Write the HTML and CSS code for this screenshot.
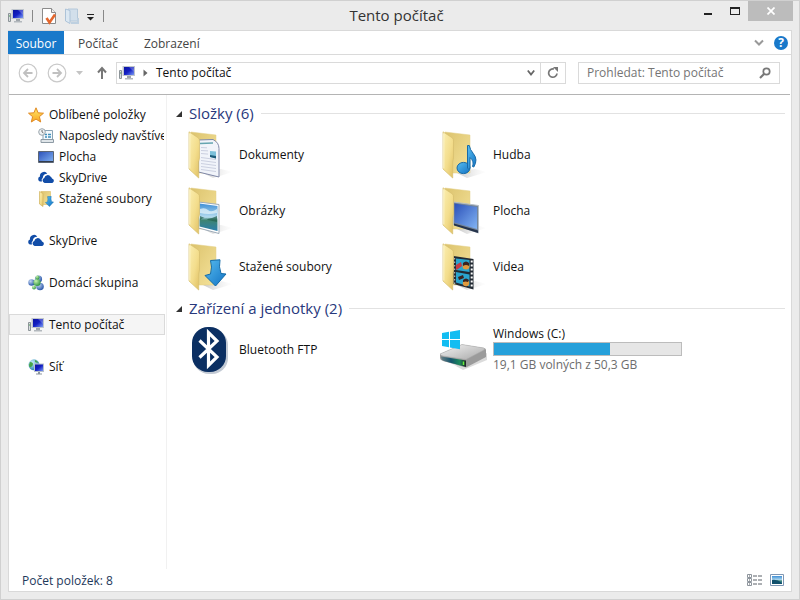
FILE: index.html
```html
<!DOCTYPE html>
<html lang="cs">
<head>
<meta charset="utf-8">
<meta name="viewport" content="width=device-width, initial-scale=1">
<title>Tento počítač</title>
<link rel="stylesheet" href="styles.css">
</head>
<body>
<svg class="defs" aria-hidden="true">
  <defs>
    <linearGradient id="flap" x1="0" y1="0" x2="1" y2="1"><stop offset="0" stop-color="#fbeeb0"/><stop offset=".55" stop-color="#f3dd8c"/><stop offset="1" stop-color="#dfbf62"/></linearGradient>
    <linearGradient id="back" x1="0" y1="0" x2="1" y2="1"><stop offset="0" stop-color="#dcc36d"/><stop offset="1" stop-color="#f5e39b"/></linearGradient>
    <linearGradient id="blue" x1="0" y1="0" x2="1" y2="1"><stop offset="0" stop-color="#57bdf0"/><stop offset="1" stop-color="#1272c4"/></linearGradient>
    <linearGradient id="screen" x1="0" y1="0" x2="1" y2="1"><stop offset="0" stop-color="#2b50b8"/><stop offset="1" stop-color="#82b4f4"/></linearGradient>
    <linearGradient id="pcscreen" x1="0" y1="0" x2="1" y2="1"><stop offset="0" stop-color="#0a12a0"/><stop offset=".5" stop-color="#1420c4"/><stop offset="1" stop-color="#7c9cf4"/></linearGradient>
    <linearGradient id="sky" x1="0" y1="0" x2="0" y2="1"><stop offset="0" stop-color="#3f8fd6"/><stop offset=".5" stop-color="#b5dcef"/><stop offset=".6" stop-color="#3e8470"/><stop offset="1" stop-color="#2b7fae"/></linearGradient>
    <linearGradient id="shade" x1="0" y1="0" x2="1" y2="0"><stop offset="0" stop-color="#aaa" stop-opacity=".7"/><stop offset="1" stop-color="#ddd" stop-opacity="0"/></linearGradient>
    <linearGradient id="metal" x1="0" y1="0" x2="1" y2="1"><stop offset="0" stop-color="#f4f4f4"/><stop offset="1" stop-color="#a8a8a8"/></linearGradient>
    <linearGradient id="front" x1="0" y1="0" x2="1" y2="0"><stop offset="0" stop-color="#6a8086"/><stop offset=".4" stop-color="#14546c"/><stop offset=".75" stop-color="#1c8a5e"/><stop offset="1" stop-color="#222"/></linearGradient>
    <radialGradient id="globe" cx=".35" cy=".3" r=".8"><stop offset="0" stop-color="#c9f0fa"/><stop offset="1" stop-color="#1677a8"/></radialGradient>
    <radialGradient id="ball" cx=".35" cy=".3" r=".8"><stop offset="0" stop-color="#c3d6f3"/><stop offset="1" stop-color="#1a4aa2"/></radialGradient>
    <radialGradient id="gball" cx=".35" cy=".3" r=".8"><stop offset="0" stop-color="#c8f2b0"/><stop offset="1" stop-color="#1d8a34"/></radialGradient>
    <linearGradient id="star" x1="0" y1="0" x2="0" y2="1"><stop offset="0" stop-color="#ffe96b"/><stop offset="1" stop-color="#f9a61e"/></linearGradient>
    <symbol id="i-pc" viewBox="0 0 16 16">
      <path d="M.5 5.500h2v8h-2z" fill="#d9dde0" stroke="#8c9498"/><path d="M1 8h1.200" stroke="#4a9a50"/>
      <path d="M3.500 1H16v10H3.500z" fill="#bfc5cc"/><path d="M5 2h10v8H5z" fill="url(#pcscreen)"/><path d="M10 2h5v5z" fill="#fff" opacity=".25"/>
      <path d="M8 11h4v2H8z" fill="#9fa5ab"/><path d="M6 13h8v1.500H6z" fill="#b3b8bd"/>
    </symbol>
    <symbol id="i-cloud" viewBox="0 0 16 16">
      <path d="M1.800 11.500A2.600 2.600 0 0 1 2 6.600 4 4 0 0 1 9.300 3.700 4.500 4.500 0 0 0 4.800 7.800 3 3 0 0 0 4 11.500z" fill="#124da8"/>
      <path d="M6.600 13A2.600 2.600 0 0 1 6.300 8 3.500 3.500 0 0 1 12.700 6.700 2.600 2.600 0 0 1 14 8.400 2.400 2.400 0 0 1 14.300 13z" fill="#124da8"/>
    </symbol>
    <symbol id="i-folder" viewBox="0 0 48 48">
      <path d="M16 41 36 38l12 3-20 6z" fill="url(#shade)"/>
      <path d="M6 1 31 4v38H12z" fill="url(#back)" stroke="#e3cf86" stroke-width=".5"/>
    </symbol>
    <symbol id="i-flap" viewBox="0 0 48 48">
      <path d="M4 .8 13.500 7Q14.500 8 14.500 10V27l-.8 4V47L4 38z" fill="url(#flap)" stroke="#d6bd6d" stroke-width=".7"/>
      <path d="M4.800 2.500V37.500" stroke="#fffbe0" stroke-width=".8"/>
    </symbol>
    <symbol id="i-down" viewBox="0 0 24 28"><path d="M7.500 1.500 17 .8Q15.500 8 18 14.500L23 15 12.500 27 2 16.500 7.500 15Q9.500 8 7.500 1.500z" fill="url(#blue)" stroke="#136ba8" stroke-width="1"/></symbol>
  </defs>
</svg>
<div class="window">
  <header class="titlebar">
    <div class="quick">
      <svg width="16" height="16"><use href="#i-pc"/></svg>
      <span class="sep"></span>
      <button class="plain" aria-label="Vlastnosti"><svg width="16" height="18" viewBox="0 0 16 18"><path d="M1.500 1.500h9l4 4v11h-13z" fill="#fff" stroke="#8b8b8b"/><path d="M10.500 1.500v4h4" fill="#eee" stroke="#8b8b8b"/><path d="m5.500 11 3 4.500L14 7.500" fill="none" stroke="#e4672e" stroke-width="2.600"/></svg></button>
      <button class="plain" aria-label="Nová složka"><svg width="14" height="18" viewBox="0 0 14 18"><path d="M3 2h9.500v12H3z" fill="#d2dfeb" stroke="#b4c8da"/><path d="M.5 2 5 3.500v13L.5 14z" fill="#dce8f2" stroke="#adc3d8"/><path d="M6 16h7v-5" fill="none" stroke="#bed0e0" stroke-width="2"/></svg></button>
      <button class="plain more" aria-label="Přizpůsobit panel"><svg width="8" height="8" viewBox="0 0 8 8"><path d="M0 .5h7" stroke="#222"/><path d="M0 3h7L3.500 6.500z" fill="#222"/></svg></button>
      <span class="sep"></span>
    </div>
    <h1>Tento počítač</h1>
    <div class="controls">
      <button aria-label="Minimalizovat"><svg width="10" height="10" viewBox="0 0 10 10"><path d="M1 7h8v2H1z" fill="#222"/></svg></button>
      <button aria-label="Maximalizovat"><svg width="10" height="8" viewBox="0 0 10 8"><path d="M0 0h10v8H0zM1 2v5h8V2z" fill="#222" fill-rule="evenodd"/></svg></button>
      <button class="close" aria-label="Zavřít"><svg width="8" height="8" viewBox="0 0 8 8"><path d="m.5.5 7 7m0-7-7 7" stroke="#fff" stroke-width="1.700"/></svg></button>
    </div>
  </header>
  <div class="client">
    <nav class="ribbon">
      <button class="file">Soubor</button>
      <button>Počítač</button>
      <button>Zobrazení</button>
      <div class="ribbon-end">
        <button class="plain" aria-label="Rozbalit pás karet"><svg width="10" height="8" viewBox="0 0 10 8"><path d="m1 1.500 4 4 4-4" fill="none" stroke="#999" stroke-width="2"/></svg></button>
        <button class="help" aria-label="Nápověda">?</button>
      </div>
    </nav>
    <div class="toolbar">
      <button class="plain" aria-label="Zpět"><svg width="20" height="20" viewBox="0 0 20 20"><circle cx="10" cy="10" r="8.800" fill="#fff" stroke="#c9c9c9" stroke-width="1.200"/><path d="M14.500 10H6m4-4-4 4 4 4" fill="none" stroke="#c0c0c0" stroke-width="1.800"/></svg></button>
      <button class="plain" aria-label="Vpřed"><svg width="20" height="20" viewBox="0 0 20 20"><circle cx="10" cy="10" r="8.800" fill="#fff" stroke="#c9c9c9" stroke-width="1.200"/><path d="M5.500 10H14m-4-4 4 4-4 4" fill="none" stroke="#c0c0c0" stroke-width="1.800"/></svg></button>
      <button class="plain" aria-label="Poslední umístění"><svg width="8" height="4" viewBox="0 0 8 4"><path d="M0 0h7L3.500 4z" fill="#c4c4c4"/></svg></button>
      <button class="plain up" aria-label="Nahoru"><svg width="10" height="14" viewBox="0 0 10 14"><path d="M5 13V2M1 6.500l4-4.500 4 4.500" fill="none" stroke="#777" stroke-width="2"/></svg></button>
      <div class="address">
        <svg width="16" height="16"><use href="#i-pc"/></svg>
        <svg class="crumb" width="5" height="8" viewBox="0 0 5 8"><path d="M.5.500 4.500 4l-4 3.500z" fill="#666"/></svg>
        <button class="plain path">Tento počítač</button>
        <button class="plain drop" aria-label="Předchozí umístění"><svg width="8" height="8" viewBox="0 0 8 8"><path d="m.8 1.500 3.200 4 3.200-4" fill="none" stroke="#666" stroke-width="1.800"/></svg></button>
        <button class="refresh" aria-label="Aktualizovat"><svg width="12" height="12" viewBox="0 0 12 12"><path d="M7 2A4.200 4.200 0 1 0 10 6.500" fill="none" stroke="#777" stroke-width="1.700"/><path d="M6 0h5v5z" fill="#777"/></svg></button>
      </div>
      <form class="search">
        <input type="text" aria-label="Prohledat" placeholder="Prohledat: Tento počítač">
        <button class="plain" type="button" aria-label="Hledat"><svg width="12" height="12" viewBox="0 0 12 12"><circle cx="7.500" cy="4.500" r="3.200" fill="none" stroke="#777" stroke-width="1.700"/><path d="M5 7 1 11" stroke="#777" stroke-width="2.200"/></svg></button>
      </form>
    </div>
    <div class="body">
      <nav class="tree">
        <ul>
          <li><a href="#"><svg width="16" height="16" viewBox="0 0 16 16"><path d="m8 .8 2.100 5 5.400.4-4.100 3.500 1.300 5.300L8 12.100 3.300 15l1.300-5.300L.5 6.200l5.400-.4z" fill="url(#star)" stroke="#e08a24"/></svg>Oblíbené položky</a>
            <ul>
              <li><a href="#"><svg width="16" height="16" viewBox="0 0 16 16"><path d="M5 2.500h9.500v9H5z" fill="#f3f8fb" stroke="#8aa3b4"/><path d="M3 11.500h12.500v3H3z" fill="#dfe5e9" stroke="#8e9ba5"/><path d="M7 6.500h2m1 0h3m-6 2.500h2m1 0h3" stroke="#3f8fbd" stroke-width="1.400"/><circle cx="4" cy="4" r="3.300" fill="#eef2f4" stroke="#9aa5ac"/><path d="M4 2v2l1.500 1" fill="none" stroke="#555" stroke-width=".8"/></svg>Naposledy navštívené</a></li>
              <li><a href="#"><svg width="16" height="16" viewBox="0 0 16 16"><path d="M.5 2.500h15v11H.5z" fill="url(#screen)" stroke="#5c6674"/><path d="M1 12.500h14" stroke="#323c4c"/></svg>Plocha</a></li>
              <li><a href="#"><svg width="16" height="16"><use href="#i-cloud"/></svg>SkyDrive</a></li>
              <li><a href="#"><svg width="16" height="16" viewBox="0 0 16 16"><path d="M3 .5h9.500v13H3z" fill="url(#back)" stroke="#dcc271" stroke-width=".7"/><path d="M1.500.500 5 2.500v13L1.500 13z" fill="url(#flap)" stroke="#d0b25c" stroke-width=".7"/><svg x="6.500" y="5" width="9.500" height="11"><use href="#i-down"/></svg></svg>Stažené soubory</a></li>
            </ul>
          </li>
          <li><a href="#"><svg width="16" height="16"><use href="#i-cloud"/></svg>SkyDrive</a></li>
          <li><a href="#"><svg width="16" height="16" viewBox="0 0 16 16"><circle cx="10.500" cy="4" r="3.600" fill="url(#ball)"/><circle cx="3.500" cy="7.500" r="3.200" fill="url(#ball)"/><circle cx="12" cy="11.500" r="3.800" fill="url(#ball)"/><circle cx="9" cy="7.500" r="3.600" fill="url(#gball)"/><circle cx="9.500" cy="2.500" r="2" fill="url(#gball)"/><circle cx="6" cy="12.500" r="2" fill="url(#gball)"/></svg>Domácí skupina</a></li>
          <li><a href="#" class="selected" aria-current="page"><svg width="16" height="16"><use href="#i-pc"/></svg>Tento počítač</a></li>
          <li><a href="#"><svg width="16" height="16" viewBox="0 0 16 16"><circle cx="6" cy="5.800" r="5.500" fill="url(#globe)"/><path d="M2 3q3 0 3 2T3 8 1 6zM7 1q3 1 3 3L7 3z" fill="#46a646"/><path d="M6 4.500h10v8.500H6z" fill="#b8c2cc"/><path d="M7 5.500h8v6.500H7z" fill="url(#pcscreen)"/><path d="M10 13h2v1.500h2v1H8v-1h2z" fill="#8b959e"/></svg>Síť</a></li>
        </ul>
      </nav>
      <main>
        <section>
          <h2><svg width="6" height="6" viewBox="0 0 6 6"><path d="M6 0v6H0z" fill="#333"/></svg>Složky (6)</h2>
          <div class="items">
            <a href="#" class="item"><svg width="48" height="48" viewBox="0 0 48 48"><use href="#i-folder"/><path d="M13.500 9 28 8.500q6 3 6 9V46L13.500 41z" fill="#f1f4fa" stroke="#8088a8"/><path d="M15 12.500l13-.5" stroke="#65a5b0" stroke-width="1.500"/><path d="M16 16.500l6 .3m-6 2.700 7 .4m-7 2.600 7 .6m-7 3.400 15 2m-15 1 15 2m-15 1 15 2m-15 1 15 2m-15 1 15 2" stroke="#cbd0e0"/><path d="M25 20l6 .6v7L25 26z" fill="#7cc0da"/><path d="m25 24 6 1v2.600L25 26z" fill="#1c5a78"/><use href="#i-flap"/></svg><span>Dokumenty</span></a>
            <a href="#" class="item"><svg width="48" height="48" viewBox="0 0 48 48"><use href="#i-folder"/><use href="#i-flap"/><ellipse cx="24.500" cy="37" rx="6.500" ry="5.600" fill="url(#blue)" stroke="#176aa8"/><path d="M28.500 37V14.500h1.800q.5 4 4 8 5 6 .5 13.500l-1.300-.5q2-5-2.500-9V37q-1 3-2.500 0z" fill="url(#blue)" stroke="#176aa8"/></svg><span>Hudba</span></a>
            <a href="#" class="item"><svg width="48" height="48" viewBox="0 0 48 48"><use href="#i-folder"/><path d="M13.500 15 34 17.500V46.500L13.500 41z" fill="#fff" stroke="#9dabb8"/><path d="M14.500 16.500 32.500 19V44L14.500 39.500z" fill="url(#sky)"/><path d="M15 22q5-2 8 1t9-1v4q-8 2-17 0z" fill="#e9f6fb" opacity=".7"/><path d="M15 33q5-4 8 0l9 2v-6l-5 2-5 1-7-3z" fill="#215f4e" opacity=".7"/><use href="#i-flap"/></svg><span>Obrázky</span></a>
            <a href="#" class="item"><svg width="48" height="48" viewBox="0 0 48 48"><use href="#i-folder"/><path d="M14.500 15 39.500 18.500V46L14.500 37.500z" fill="#75869a" stroke="#b6bec7"/><path d="M15.500 16.500 38 20v22L15.500 35.500z" fill="url(#screen)"/><path d="M15 36.500 39 43.500V46L15 38.500z" fill="#26344c"/><use href="#i-flap"/></svg><span>Plocha</span></a>
            <a href="#" class="item"><svg width="48" height="48" viewBox="0 0 48 48"><use href="#i-folder"/><use href="#i-flap"/><svg x="18" y="16" width="24" height="28"><use href="#i-down"/></svg></svg><span>Stažené soubory</span></a>
            <a href="#" class="item"><svg width="48" height="48" viewBox="0 0 48 48"><use href="#i-folder"/><path d="M14.500 13 34.500 16V46.500L14.500 41z" fill="#222a33"/><path d="M17 15.500 30.500 17v12L17 27zM17 29l13.500 2.500V43.500L17 39.500z" fill="#2aa5ce"/><circle cx="27" cy="23" r="3.500" fill="#e09a3e"/><circle cx="27" cy="40" r="3.200" fill="#e09a3e"/><path d="M17 22l5-3 1 4-4 3-2 1z" fill="#c43c46"/><path d="M24 20q3-3 6 0v3q-3-2-6 0zM24 37q3-3 6 0l-1 2q-2-1-5 0zM19 34l5-2 1 3-5 2z" fill="#3b2320"/><path d="M32.700 17.500V45" stroke="#fff" stroke-width="2" stroke-dasharray="2 2"/><path d="M15.700 15v26" stroke="#ccc" stroke-dasharray="1.500 2"/><use href="#i-flap"/></svg><span>Videa</span></a>
          </div>
        </section>
        <section>
          <h2><svg width="6" height="6" viewBox="0 0 6 6"><path d="M6 0v6H0z" fill="#333"/></svg>Zařízení a jednotky (2)</h2>
          <div class="items">
            <a href="#" class="item"><svg width="48" height="48" viewBox="0 0 48 48"><rect x="8" y="3" width="35" height="45" rx="16" fill="#aab4c2" opacity=".7"/><rect x="7" y="1" width="34" height="45" rx="16" fill="#0b2f62"/><path d="M14.500 14.500 32 31 23.500 39.500V6.500L32 15 14.500 31.500" fill="none" stroke="#fff" stroke-width="3.200"/></svg><span>Bluetooth FTP</span></a>
            <a href="#" class="item"><svg width="48" height="48" viewBox="0 0 48 48"><path d="M1 31 17 39.500 48 27v7L24 44z" fill="#999" opacity=".35"/><path d="M1 28 23 18.500 45 22Q47 22.500 47 24v7L27 41.500 4 35Q1 34 1 32z" fill="#9b9b9b"/><path d="M1 28 23 18.500 45 22q1 1 0 2L27 33.500 4 30q-2-.5-3-2z" fill="url(#metal)" stroke="#aaa" stroke-width=".5"/><path d="M2 30.500 27 34.500v6.500L5 35Q2 34 2 30.500z" fill="url(#front)"/><path d="M24.500 35.500v3.500" stroke="#64f03c" stroke-width="1.500"/><path d="m3 7 7-1.200V13H3zm8-1.300L21 4v9H11zM3 14h7v7.300L3 20zm8 0h10v9.200l-10-1.700z" fill="#12bdf2"/></svg><span class="drive"><span>Windows (C:)</span><progress value="62" max="100" aria-label="Využité místo"></progress><span class="muted">19,1 GB volných z 50,3 GB</span></span></a>
          </div>
        </section>
      </main>
    </div>
    <footer class="status">
      <span>Počet položek: 8</span>
      <div class="views">
        <button class="plain" aria-label="Podrobnosti"><svg width="16" height="14" viewBox="0 0 16 14"><path d="M.5 1.500h4v3h-4zm0 4h4v3h-4zm0 4h4v3h-4z" fill="#fff" stroke="#8d949c"/><path d="M2 3h1M2 7h1m-1 4h1M6 3h4m1 0h4M6 7h4m1 0h4m-9 4h4m1 0h4" stroke="#5a6068"/></svg></button>
        <button class="plain" aria-label="Velké ikony"><svg width="14" height="12" viewBox="0 0 14 12"><path d="M.5.500h13v11H.5z" fill="#fff" stroke="#7f97b4"/><path d="M2 2h10v8H2z" fill="url(#sky)"/><path d="M2 6q5-1 10 3v1H2z" fill="#10506c"/></svg></button>
      </div>
    </footer>
  </div>
</div>
</body>
</html>
```
FILE: styles.css
```css
* { box-sizing: border-box; }
body {
  margin: 0;
  font: 12px/21px "Open Sans", "Noto Sans", sans-serif;
  color: #111;
}
svg { display: block; flex: none; }
a { color: inherit; text-decoration: none; }
ul { list-style: none; margin: 0; padding: 0; }
button {
  border: 0;
  margin: 0;
  padding: 0;
  background: none;
  font: inherit;
  color: inherit;
  display: flex;
  align-items: center;
  justify-content: center;
}
.defs { position: absolute; width: 0; height: 0; }

.window {
  display: flex;
  flex-direction: column;
  min-height: 100vh;
  padding: 0 7px 7px;
  border: 1px solid #d0d0d0;
  background: #ebebeb;
}
.titlebar {
  display: grid;
  grid-template-columns: 1fr auto 1fr;
  height: 29px;
}
.titlebar h1 {
  margin: 0 7px 0 0;
  font-size: 15px;
  font-weight: 400;
  line-height: 29px;
  color: #333;
}
.quick { display: flex; align-items: center; gap: 8px; }
.quick .sep { width: 1px; height: 12px; background: #888; }
.quick .more { margin-top: 4px; }
.controls { display: flex; justify-content: flex-end; margin-right: -1px; }
.controls button { width: 27px; height: 20px; }
.controls .close { width: 45px; background: #bcbcbc; }

.client {
  flex: 1;
  display: flex;
  flex-direction: column;
  border: 1px solid #d9d9d9;
  background: #fff;
}
.ribbon {
  display: flex;
  height: 24px;
  border-bottom: 1px solid #dadada;
  color: #444;
}
.ribbon > button { padding: 2px 13px 0; }
.ribbon > .file {
  width: 56px;
  margin: 0 1px 0 -1px;
  padding: 2px 0 0;
  background: #1979ca;
  color: #fff;
}
.ribbon-end {
  display: flex;
  align-items: center;
  gap: 10px;
  margin-left: auto;
  padding-right: 3px;
}
.help {
  width: 14px;
  height: 14px;
  border-radius: 50%;
  background: #1979ca;
  color: #fff;
  font-weight: 700;
  line-height: 14px;
}

.toolbar {
  display: flex;
  align-items: center;
  gap: 9px;
  height: 40px;
  margin: 0 1px 0 0;
  padding: 0 10px 4px 9px;
  border-bottom: 1px solid #b4b4b4;
}
.up { margin-left: 4px; }
.address {
  flex: 1;
  display: flex;
  align-items: center;
  height: 22px;
  border: 1px solid #dadada;
}
.address > svg:first-child { margin-left: 2px; }
.address .crumb { margin: 0 8px; }
.address .drop { width: 18px; height: 20px; margin-left: auto; }
.refresh { width: 25px; height: 20px; border-left: 1px solid #dadada; }
.search {
  display: flex;
  align-items: center;
  width: 202px;
  height: 22px;
  margin-left: 3px;
  border: 1px solid #dadada;
  padding: 0 8px;
}
.search input {
  flex: 1;
  min-width: 0;
  border: 0;
  padding: 0;
  outline: 0;
  background: none;
  font: inherit;
}
.search input::placeholder { color: #757575; opacity: 1; }

.body { flex: 1; display: flex; }
.tree {
  flex: none;
  width: 158px;
  padding-top: 9px;
  border-right: 1px solid #f1f1f1;
}
.tree > ul {
  display: grid;
  grid-template-columns: minmax(0, 1fr);
  gap: 21px;
}
.tree a {
  display: flex;
  align-items: center;
  gap: 5px;
  height: 21px;
  margin-right: 1px;
  padding-left: 18px;
  border: 1px solid transparent;
  white-space: nowrap;
  overflow: hidden;
}
.tree ul ul a { padding-left: 28px; }
.tree .selected { background: #f5f5f5; border-color: #dadada; }

main { flex: 1; padding: 5px 6px 0 9px; }
h2 {
  display: flex;
  align-items: center;
  gap: 7px;
  height: 27px;
  margin: 0;
  font-size: 15px;
  font-weight: 400;
  color: #28387c;
}
h2::after { content: ""; flex: 1; height: 1px; background: #e2e2e2; }
.items {
  display: grid;
  grid-template-columns: repeat(auto-fill, 254px);
  padding-left: 9px;
}
.item { display: flex; align-items: center; gap: 6px; height: 56px; }
.item > span { padding-bottom: 2px; }
.drive { display: grid; line-height: 17px; }
.drive progress {
  appearance: none;
  width: 189px;
  height: 14px;
  border: 1px solid #bcbcbc;
  background: #e6e6e6;
}
.drive progress::-webkit-progress-bar { background: #e6e6e6; }
.drive progress::-webkit-progress-value { background: #26a0da; }
.muted { color: #6d6d6d; }

.status {
  display: flex;
  align-items: center;
  justify-content: space-between;
  height: 22px;
  padding: 0 7px 0 13px;
  color: #1e395b;
}
.views { display: flex; align-items: center; gap: 7px; }
```
